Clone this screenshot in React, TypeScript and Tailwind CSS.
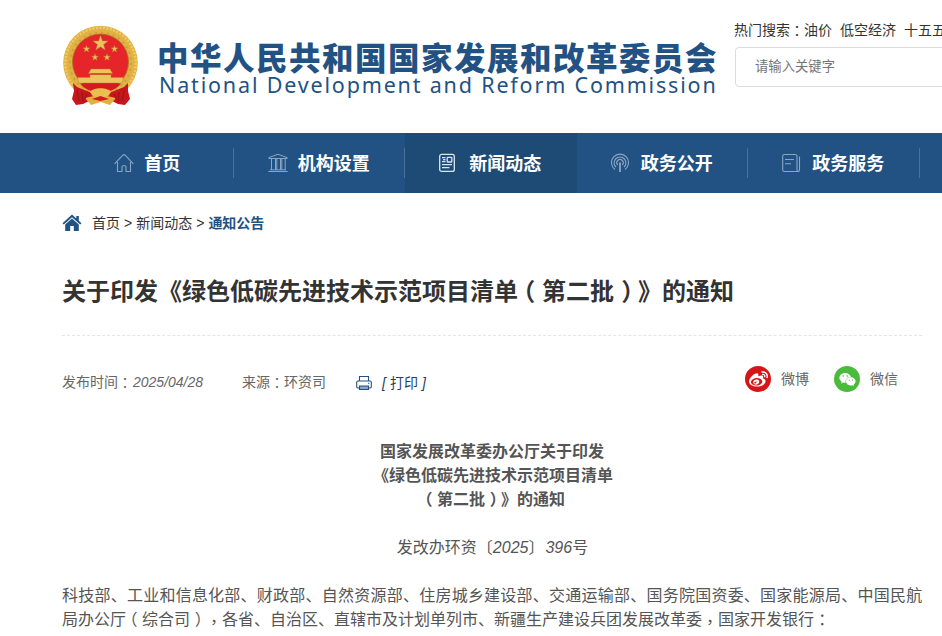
import React from "react";
import { FaWeibo, FaWeixin } from "react-icons/fa";

const star = (cx: number, cy: number, r: number) =>
  Array.from({ length: 10 }, (_, i) => {
    const a = (Math.PI / 5) * i - Math.PI / 2;
    const d = i % 2 ? r * 0.4 : r;
    return `${(cx + Math.cos(a) * d).toFixed(2)},${(cy + Math.sin(a) * d).toFixed(2)}`;
  }).join(" ");

// the TC glyphs sit in the middle of their cell
const Colon = () => (
  <span lang="zh-TW" className="relative top-px font-['Noto_Sans_CJK_TC'] leading-[0]">
    ：
  </span>
);
const Comma = () => (
  <span lang="zh-TW" className="relative top-[3px] font-['Noto_Sans_CJK_TC'] leading-[0]">
    ，
  </span>
);

const Open = () => <span className="relative -left-[0.28em]">（</span>;
const Close = () => <span className="relative left-[0.3em]">）</span>;

const Emblem = () => (
  <svg width="76" height="82" viewBox="0 0 76 82" className="shrink-0">
    <circle cx="37.5" cy="38" r="37.3" fill="#e0b145" />
    <circle cx="37.5" cy="38" r="35.2" fill="none" stroke="#f0cb5e" strokeWidth="2.5" strokeDasharray="2 1.5" />
    <circle cx="37.5" cy="38" r="30.5" fill="none" stroke="#cf9a38" strokeWidth="1.6" strokeDasharray="2 4" />
    <circle cx="37.5" cy="37" r="28" fill="#e6252b" stroke="#a9721f" strokeWidth="0.8" />
    <g fill="#eac45c" stroke="#b98328" strokeWidth="0.4">
      <polygon points={star(37.5, 18.5, 8)} />
      <polygon points={star(23.5, 24, 3.6)} />
      <polygon points={star(51.5, 24, 3.6)} />
      <polygon points={star(32, 32.3, 3.6)} />
      <polygon points={star(44, 32.3, 3.6)} />
      <path d="M28 44H47L49.5 48.5H25.5Z" />
      <path d="M27 49.5H48V52.5H60.5L59 58H16L14.5 52.5H27Z" />
    </g>
    <path d="M27 49H48" stroke="#d8201f" strokeWidth="0.8" />
    <path d="M17 58.5H58C53 65 46 67 37.5 67S22 65 17 58.5Z" fill="#d71920" />
    <path d="M10 58L14 62L29 68L46 68L61 62L65 58L65 66L67 74L62 80L55 79L47 75L28 75L20 79L13 80L9 74L11 66Z" fill="#c8161d" />
    <path d="M27 67C30 62 45 62 48 67L44 73H31Z" fill="#e9bf4f" />
    <path d="M22 73L31 71L37.5 74L44 71L53 73L47 80L37.5 77L28 80Z" fill="#e3b040" />
    <path d="M29 74L37.5 71L46 74L37.5 76Z" fill="#d01a20" />
    <path d="M14 65L16 76M19 67L20 77M24 69L22 74M61 65L59 76M56 67L55 77M51 69L53 74" stroke="#96141a" strokeWidth="1" />
  </svg>
);

const HomeIcon = () => (
  <svg width="20" height="20" viewBox="0 0 20 20" fill="none" stroke="#8ba6c2" strokeWidth="1.1">
    <path d="M.6 10.8L8.6 2.4Q10 .9 11.4 2.4L19.4 10.8" />
    <path d="M3.5 9V18.5H8V13.8Q8 12.8 9 12.8H11Q12 12.8 12 13.8V18.5H16.5V9" />
  </svg>
);

const BankIcon = () => (
  <svg width="20" height="20" viewBox="0 0 20 20" fill="none" stroke="#8ba6c2" strokeWidth="1">
    <path d="M.8 5.5V4.6L10 1.3L19.2 4.6V5.5Z" />
    <path d="M3.5 6V17M7.5 6V17M8.8 6V17M12.5 6V17M13.8 6V17M17.2 6V17M2 16.8H18M.3 18.5H19.7" />
  </svg>
);

const NewsIcon = () => (
  <svg width="20" height="20" viewBox="0 0 20 20" fill="none" stroke="#dbe5ee" strokeWidth="1.3">
    <rect x=".7" y="1.4" width="14.6" height="17" rx="2" />
    <rect x="8.2" y="4.4" width="4.6" height="4.6" rx=".6" />
    <path d="M3 4.7H6.5M3 8.7H6.5M3 11.6H13M3 14.7H10.5" />
    <path d="M4 6.7H6.5" />
  </svg>
);

const SignalIcon = () => (
  <svg width="20" height="20" viewBox="0 0 20 20" fill="none" stroke="#8ba6c2" strokeWidth="1.1">
    <path d="M4 16.5A8.5 8.5 0 1 1 14 16.5" />
    <path d="M5 14.2A5.9 5.9 0 1 1 13 14.2" />
    <path d="M6.7 12A3.2 3.2 0 1 1 11.3 12" />
    <path d="M9 9.5V19" strokeWidth="1.8" />
  </svg>
);

const ServiceIcon = () => (
  <svg width="20" height="20" viewBox="0 0 20 20" fill="none" stroke="#8ba6c2" strokeWidth="1.1">
    <path d="M2.5 1.5H13Q15 1.5 15 3.5V16.8Q15 18.5 16.4 18.5H2.5Q.7 18.5 .7 16.7V3.3Q.7 1.5 2.5 1.5Z" />
    <path d="M17.5 3.5V16.8Q17.5 18.5 16 18.5M3 6.5H12M3 10.8H9" />
  </svg>
);

const navItems = [
  { label: "首页", icon: <HomeIcon />, active: false, line: true },
  { label: "机构设置", icon: <BankIcon />, active: false, line: true },
  { label: "新闻动态", icon: <NewsIcon />, active: true, line: false },
  { label: "政务公开", icon: <SignalIcon />, active: false, line: true },
  { label: "政务服务", icon: <ServiceIcon />, active: false, line: true },
];

const Header = () => (
  <header className="flex h-[133px] pl-[63px]">
    <div className="flex w-[672px] shrink-0 pt-[25px]">
      <Emblem />
      <div className="ml-[18px] pt-[16px] whitespace-nowrap text-[#225283]">
        <div className="h-[34px] text-[31.5px] leading-[36px] font-black tracking-[1.5px]">
          中华人民共和国国家发展和改革委员会
        </div>
        <div className="pl-[2px] font-['Noto_Sans'] text-[21.5px] leading-[20px] tracking-[1.83px]">
          National Development and Reform Commission
        </div>
      </div>
    </div>
    <div className="-ml-px w-[400px] shrink-0 pt-5">
      <div className="flex h-5 gap-2 text-sm leading-5 whitespace-nowrap text-[#333]">
        <span>
          热门搜索
          <Colon />
          油价
        </span>
        <span>低空经济</span>
        <span>十五五</span>
      </div>
      <div className="mt-[7px] ml-px flex h-10 items-center rounded border border-[#dcdcdc] pl-[19px] text-[13.33px] text-[#757575]">
        请输入关键字
      </div>
    </div>
  </header>
);

const Navbar = () => (
  <nav className="flex h-[60px] bg-[#225283] pl-[62px]">
    {navItems.map((item) => (
      <div
        key={item.label}
        className={`flex w-[171.5px] shrink-0 items-center ${item.active ? "bg-[#1e4a76]" : ""}`}
      >
        <div
          className={`flex h-[30px] w-full items-center justify-center gap-[10px] border-r text-lg font-bold text-white ${
            item.line ? "border-[#4b7399]" : "border-transparent"
          }`}
        >
          {item.icon}
          <span className="pt-[2px]">{item.label}</span>
        </div>
      </div>
    ))}
  </nav>
);

const Breadcrumb = () => (
  <div className="flex h-[60px] items-center text-sm text-[#333]">
    <svg width="20" height="18" viewBox="0 0 20 18" className="mr-[10px]" fill="#225283">
      <path d="M10 .5L.5 9.2L1.8 10.4L10 3.2L18.2 10.4L19.5 9.2L16.8 6.7V2H14.3V4.4Z" />
      <path d="M10 4.6L3.2 10.6V17H8.2V12H11.8V17H16.8V10.6Z" />
    </svg>
    <span>首页</span>
    <span className="mx-1">&gt;</span>
    <span>新闻动态</span>
    <span className="mx-1">&gt;</span>
    <span className="font-bold text-[#225283]">通知公告</span>
  </div>
);

const Meta = () => (
  <div className="flex h-[92px] items-center text-sm text-[#666]">
    <span>
      发布时间
      <Colon />
      <i className="ml-px">2025/04/28</i>
    </span>
    <span className="ml-[39px]">
      来源
      <Colon />
      环资司
    </span>
    <div className="ml-[30px] flex items-center pt-[2px] text-[#225283]">
      <svg width="16" height="16" viewBox="0 0 16 16" fill="none" stroke="#225283" strokeWidth="1.1">
        <path d="M3.5 6V1.5H12.5V6" />
        <path d="M3 13H2Q.7 13 .7 11.7V7.3Q.7 6 2 6H14Q15.3 6 15.3 7.3V11.7Q15.3 13 14 13H13" />
        <path d="M3.5 11H12.5V14.5H3.5Z" fill="#8ba6c2" />
        <path d="M12 8.3H13.3" />
      </svg>
      <span className="ml-[10px] flex gap-1 text-[#1f3f6a]">
        <i>[</i>
        <span>打印</span>
        <i>]</i>
      </span>
    </div>
    <div className="mr-6 ml-auto flex items-center pb-[6px]">
      <span className="flex size-[26px] items-center justify-center rounded-full bg-[#d61518] text-white">
        <FaWeibo size={19} />
      </span>
      <span className="ml-[10px]">微博</span>
      <span className="ml-[25px] flex size-[26px] items-center justify-center rounded-full bg-[#4abb3b] text-white">
        <FaWeixin size={17} />
      </span>
      <span className="ml-[10px]">微信</span>
    </div>
  </div>
);

const Article = () => (
  <article className="mt-3 text-base leading-6 text-[#555]">
    <div className="text-center font-bold">
      <p>国家发展改革委办公厅关于印发</p>
      <p className="pl-[2px]">《绿色低碳先进技术示范项目清单</p>
      <p className="pl-[2px]">
        <Open />
        第二批
        <Close />
        》的通知
      </p>
    </div>
    <p className="mt-6 pl-px text-center">
      发改办环资〔<i>2025</i>〕<i className="ml-px">396</i>号
    </p>
    <div className="mt-6 whitespace-nowrap">
      <p className="tracking-[0.235px]">
        科技部、工业和信息化部、财政部、自然资源部、住房城乡建设部、交通运输部、国务院国资委、国家能源局、中国民航
      </p>
      <p>
        局办公厅
        <Open />
        综合司
        <Close />
        <Comma />
        各省、自治区、直辖市及计划单列市、新疆生产建设兵团发展改革委
        <Comma />
        国家开发银行
        <Colon />
      </p>
      <p className="pt-[3px] tracking-[0.235px]">
        　　为加快工业和能源低碳化，现已按照《绿色低碳先进技术示范工程实施方案》和《绿色低碳先进技术示范项目
      </p>
    </div>
  </article>
);

const App = () => {
  return (
    <div
      lang="zh-CN"
      className="h-[636px] w-[942px] overflow-hidden bg-white font-['Liberation_Sans','Noto_Sans_CJK_SC',sans-serif] [text-spacing-trim:space-all]"
    >
      <Header />
      <Navbar />
      <main className="w-[922px] pl-[62px]">
        <Breadcrumb />
        <h1 className="h-[83px] border-b border-dashed border-[#e5e5e5] pt-[21px] text-2xl leading-[36px] font-bold whitespace-nowrap text-[#333]">
          关于印发《绿色低碳先进技术示范项目清单
          <Open />
          第二批
          <Close />
          》的通知
        </h1>
        <Meta />
        <Article />
      </main>
    </div>
  );
};

export default App;
